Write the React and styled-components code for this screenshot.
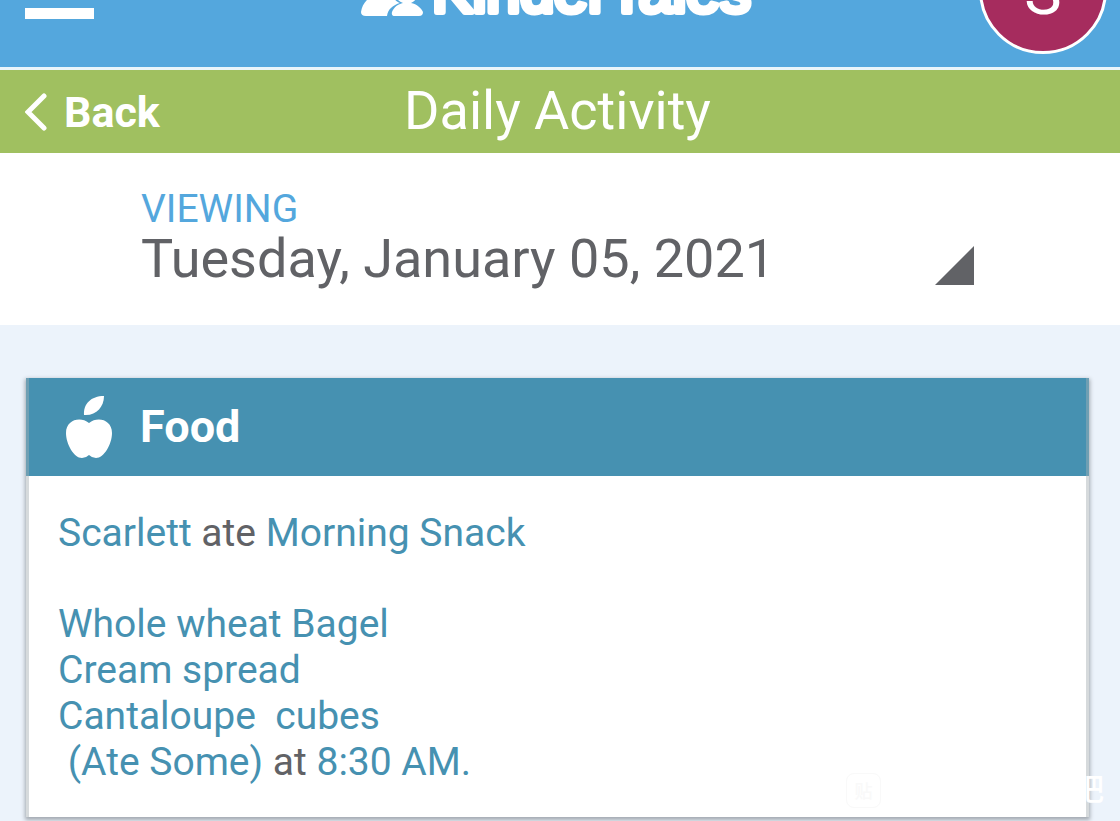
import React from "react";
import styled, { createGlobalStyle } from "styled-components";

const Global = createGlobalStyle`
  * { box-sizing: border-box; }
  body { margin: 0; background: #ecf3fb; font-family: Roboto, "Liberation Sans", sans-serif; color: #616266; }
  button { font: inherit; border: 0; padding: 0; background: none; cursor: pointer; }
`;

const Page = styled.div`
  position: relative;
  height: 100vh;
  overflow: hidden;
`;

const TopBar = styled.header`
  display: flex;
  justify-content: space-between;
  align-items: flex-end;
  height: 70px;
  padding: 0 13px 13px 25px;
  background: #54a7dd;
  border-bottom: 3px solid #e9f5fb;
`;

const MenuButton = styled.button`
  width: 69px;
  height: 52px;
  border-bottom: 11px solid #fff;
  margin-bottom: 35px;
`;

const Logo = styled.a`
  margin: 0 0 32px 46px;
  color: #fff;

  svg {
    display: block;
  }
`;

const Wordmark = styled.text`
  font: 400 61px "Liberation Sans", sans-serif;
  fill: #fff;
  stroke: #fff;
  stroke-width: 6px;
  stroke-linejoin: round;
  stroke-linecap: round;
`;

const Avatar = styled.button`
  && { padding-top: 4px; font-size: 63px; }
  flex: none;
  width: 128px;
  height: 128px;
  border: 3px solid #fff;
  border-radius: 50%;
  background: #a62c5e;
  color: #fff;
`;

const TitleBar = styled.nav`
  display: grid;
  grid-template-columns: 1fr auto 1fr;
  align-items: center;
  height: 83px;
  padding: 0 30px 0 25px;
  background: #a0c060;
  color: #fff;
`;

const BackButton = styled.button`
  display: flex;
  align-items: center;
  gap: 16px;
  color: #fff;
  && { font-size: 43px; font-weight: 700; }
`;

const Title = styled.h1`
  margin: 0;
  padding-bottom: 2px;
  font-size: 54px;
  line-height: 80px;
  font-weight: 400;
`;

const DatePicker = styled.button`
  && { display: flex; background: #fff; padding: 0 146px 38px 141px; }
  justify-content: space-between;
  align-items: flex-end;
  width: 100%;
  height: 172px;
  text-align: left;
  color: #616266;
`;

const DateText = styled.span`
  display: flex;
  flex-direction: column;
  font-size: 54px;
  line-height: 56px;
`;

const Label = styled.span`
  color: #54a7dd;
  font-size: 39px;
  line-height: 44px;
`;

const Corner = styled.svg`
  margin-bottom: 2px;
`;

const Card = styled.section`
  margin: 53px 31px 0 26px;
  box-shadow: 0 2px 4px 1px #a3a9b1;
`;

const CardHeader = styled.header`
  display: flex;
  align-items: center;
  gap: 28px;
  height: 98px;
  padding: 0 37px;
  background: #4691b1;
  border: solid #6f9fb3;
  border-width: 0 3px;
  color: #fff;
`;

const CardTitle = styled.h2`
  margin: 0;
  font-size: 45px;
  line-height: 52px;
`;

const CardBody = styled.div`
  padding: 34px 29px 32px;
  background: #fff;
  border: solid #d6dadc;
  border-width: 0 3px;
  font-size: 39px;
  line-height: 46px;
  white-space: pre-wrap;
`;

const Line = styled.p`
  margin: 0 0 ${(p) => (p.$spaced ? 45 : 0)}px;
`;

const Accent = styled.span`
  color: #4691b1;
`;

const Watermark = styled.div`
  position: absolute;
  right: 16px;
  bottom: 13px;
  left: 846px;
  display: flex;
  justify-content: space-between;
  align-items: flex-start;
  color: #fff;
  font: 500 31px/28px "Noto Sans CJK SC", sans-serif;
`;

const Badge = styled.span`
  width: 35px;
  height: 35px;
  border: 1px solid #f9f9f9;
  border-radius: 8px;
  color: #f9f9f9;
  font-size: 18px;
  line-height: 32px;
  text-align: center;
`;

export default function App() {
  return (
    <Page>
      <Global />
      <TopBar>
        <MenuButton aria-label="Menu" />
        <Logo href="#" aria-label="KinderTales">
          <svg width="400" height="46" viewBox="360 -24 400 46" fill="#fff" aria-hidden="true">
            <path d="M361 12C362 5 366 -1 374 -5H393C394 0 397 2 400 3C393 5 388 9 387 16H366Q361 16 361 12Z" />
            <path d="M395 16Q391 16 392 12C394 7 398 4 403 3C398 1 394 -3 394 -8H419C419 -3 415 1 411 3C417 4 421 8 423 12Q423 16 419 16Z" />
            <Wordmark x="432" y="12">KinderTales</Wordmark>
          </svg>
        </Logo>
        <Avatar aria-label="Profile">S</Avatar>
      </TopBar>
      <TitleBar>
        <BackButton>
          <svg width="23" height="38" viewBox="0 0 23 38" fill="none" stroke="#fff" strokeWidth="5" strokeLinecap="round" aria-hidden="true">
            <path d="M19 3L3 19L19 35" />
          </svg>
          Back
        </BackButton>
        <Title>Daily Activity</Title>
      </TitleBar>
      <DatePicker>
        <DateText>
          <Label>VIEWING</Label>
          Tuesday, January 05, 2021
        </DateText>
        <Corner width="39" height="39" viewBox="0 0 39 39" fill="#616266" aria-hidden="true">
          <path d="M39 0V39H0Z" />
        </Corner>
      </DatePicker>
      <Card>
        <CardHeader>
          <svg width="46" height="62" viewBox="0 0 46 62" fill="#fff" aria-hidden="true">
            <path d="M18 19C17 8 25 0 38 0C38 11 30 20 18 19Z" />
            <path d="M23 27C32 20 46 24 46 37C46 48 38 62 30 62Q26 62 23 59Q20 62 16 62C8 62 0 48 0 37C0 24 14 20 23 27Z" />
          </svg>
          <CardTitle>Food</CardTitle>
        </CardHeader>
        <CardBody>
          <Line $spaced><Accent>Scarlett</Accent> ate <Accent>Morning Snack</Accent></Line>
          <Line><Accent>Whole wheat Bagel</Accent></Line>
          <Line><Accent>Cream spread</Accent></Line>
          <Line><Accent>Cantaloupe  cubes</Accent></Line>
          <Line><Accent> (Ate Some)</Accent> at <Accent>8:30 AM.</Accent></Line>
        </CardBody>
      </Card>
      <Watermark><Badge>贴</Badge>吧</Watermark>
    </Page>
  );
}
